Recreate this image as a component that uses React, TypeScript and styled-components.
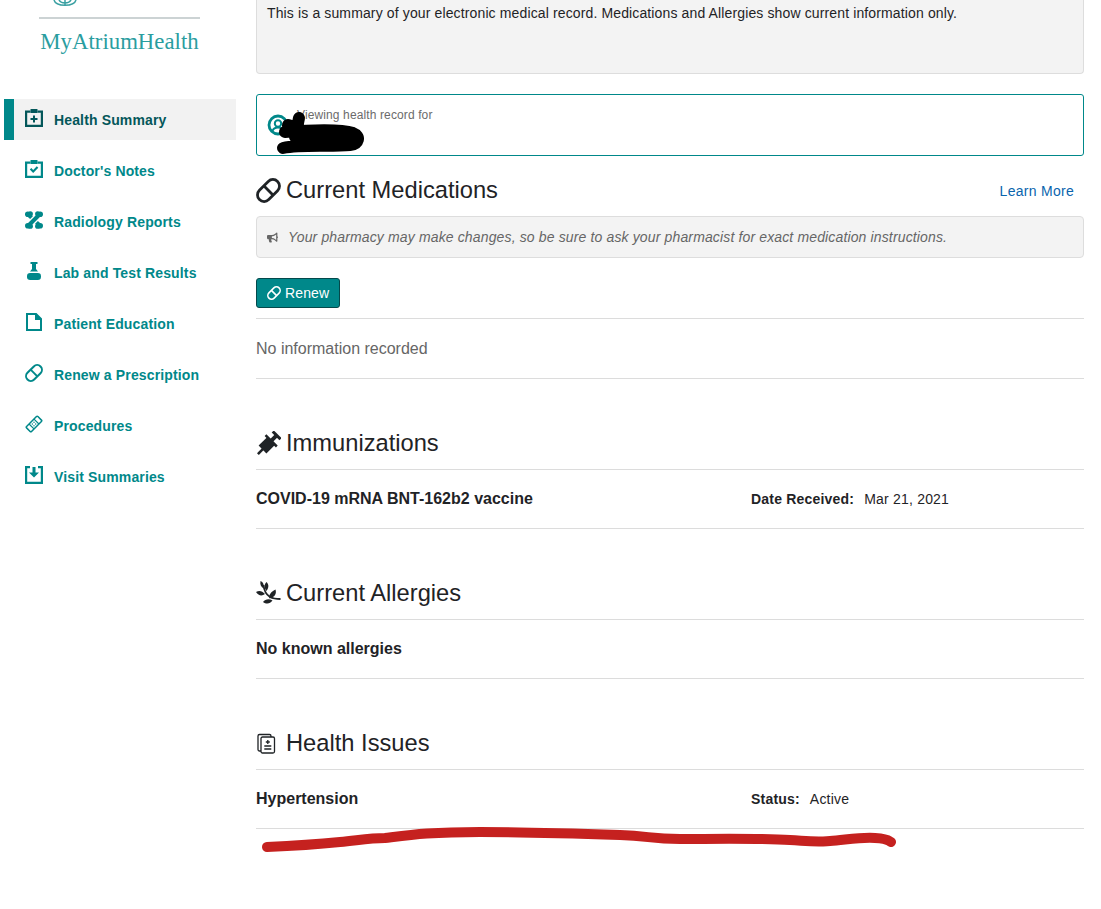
import React from 'react'
import styled, { createGlobalStyle } from 'styled-components'
import { FaBullhorn } from 'react-icons/fa'

const teal = '#00888a'
const dark = '#1f2326'

const GlobalStyle = createGlobalStyle`
  html, body {
    margin: 0;
    padding: 0;
    background: #fff;
    font-family: "Liberation Sans", Arial, sans-serif;
    color: ${dark};
  }
`

const Page = styled.div`
  display: flex;
  height: 909px;
  overflow: hidden;
  position: relative;
`

const Sidebar = styled.aside`
  width: 232px;
  flex-shrink: 0;
  padding-left: 4px;
  margin-right: 20px;
`

const Logo = styled.div`
  height: 99px;
  padding-left: 35px;
  box-sizing: border-box;
`

const LogoMark = styled.svg`
  display: block;
  margin-left: 14px;
  width: 24px;
  height: 6px;
`

const LogoRule = styled.div`
  width: 161px;
  height: 2px;
  margin-top: 11px;
  background: #ccd3d4;
`

const LogoText = styled.div`
  margin-top: 10px;
  width: 161px;
  text-align: center;
  font-family: "Liberation Serif", "Times New Roman", serif;
  font-size: 22.8px;
  line-height: 26px;
  white-space: nowrap;
  color: #2a9d9f;
`

const Nav = styled.nav`
  display: flex;
  flex-direction: column;
  gap: 10px;
`

const NavItem = styled.a<{ $active?: boolean }>`
  display: flex;
  align-items: center;
  height: 41px;
  box-sizing: border-box;
  padding-left: ${({ $active }) => ($active ? '11px' : '21px')};
  border-left: ${({ $active }) => ($active ? `10px solid ${teal}` : 'none')};
  background: ${({ $active }) => ($active ? '#f2f2f2' : 'transparent')};
  color: ${({ $active }) => ($active ? '#04575a' : teal)};
  font-size: 14px;
  font-weight: 700;
  letter-spacing: 0.14px;
`

const NavIcon = styled.svg`
  width: 18px;
  height: 18px;
  margin-right: 11px;
  margin-top: -3px;
  flex-shrink: 0;
  fill: currentColor;
`

const Main = styled.main`
  width: 828px;
`

const SummaryBox = styled.div`
  height: 74px;
  box-sizing: border-box;
  padding: 5px 10px;
  background: #f3f3f3;
  border: 1px solid #ddd;
  border-top: none;
  border-radius: 0 0 4px 4px;
  font-size: 14px;
  line-height: 16px;
  letter-spacing: 0.13px;
`

const PatientBox = styled.div`
  display: flex;
  height: 62px;
  box-sizing: border-box;
  margin-top: 20px;
  padding: 13px 10px;
  border: 1px solid ${teal};
  border-radius: 3px;
`

const PatientIcon = styled.svg`
  width: 22px;
  height: 22px;
  margin-top: 6px;
  margin-right: 8px;
  flex-shrink: 0;
`

const PatientLabel = styled.div`
  font-size: 12px;
  line-height: 14px;
  letter-spacing: 0.12px;
  color: #6b6b6b;
`

const SectionHead = styled.div<{ $top: number }>`
  display: flex;
  align-items: center;
  height: 36px;
  margin-top: ${({ $top }) => $top}px;
`

const Title = styled.h2`
  flex: 1;
  margin: 0;
  font-size: 23.7px;
  font-weight: 400;
  line-height: 36px;
  color: ${dark};
`

const TitleIcon = styled.svg`
  display: block;
  width: 25px;
  height: 25px;
  margin-right: 5px;
  flex-shrink: 0;
  fill: ${dark};
`

const LearnMore = styled.a`
  padding: 2px 10px 0 0;
  font-size: 14px;
  letter-spacing: 0.28px;
  color: #0a64ad;
`

const Notice = styled.div`
  display: flex;
  align-items: center;
  height: 42px;
  box-sizing: border-box;
  margin-top: 8px;
  padding: 0 10px;
  background: #f3f3f3;
  border: 1px solid #ddd;
  border-radius: 4px;
  font-size: 14px;
  font-style: italic;
  letter-spacing: 0.14px;
  color: #666;

  svg {
    margin-right: 10px;
    width: 11px;
    height: 11px;
  }
`

const RenewButton = styled.button`
  display: flex;
  align-items: center;
  gap: 4px;
  height: 30px;
  width: 84px;
  box-sizing: border-box;
  margin-top: 20px;
  padding: 0 10px;
  background: ${teal};
  border: 1px solid #04494b;
  border-radius: 3px;
  font-family: inherit;
  font-size: 14px;
  letter-spacing: 0.14px;
  color: #fff;
`

const ButtonIcon = styled.svg`
  width: 14px;
  height: 14px;
  flex-shrink: 0;
`

const Rule = styled.div<{ $top?: number }>`
  height: 1px;
  margin-top: ${({ $top }) => $top ?? 0}px;
  background: #dcdcdc;
`

const EmptyText = styled.div`
  display: flex;
  align-items: center;
  height: 59px;
  font-size: 16px;
  color: #666;
`

const Row = styled.div`
  display: flex;
  align-items: center;
  height: 58px;
`

const RowName = styled.div`
  width: 495px;
  font-size: 16px;
  font-weight: 700;
`

const RowLabel = styled.span`
  margin-right: 10px;
  font-size: 14px;
  font-weight: 700;
  letter-spacing: 0.2px;
`

const RowValue = styled.span`
  font-size: 14px;
  letter-spacing: 0.2px;
`

const Scribble = styled.svg`
  position: absolute;
  left: 0;
  top: 0;
  width: 1101px;
  height: 909px;
  fill: none;
  stroke-linecap: round;
  stroke-linejoin: round;
  pointer-events: none;
`

const Pill = ({ color }: { color: string }) => (
  <g transform="rotate(-45 9 9)" fill="none" stroke={color} strokeWidth="2">
    <rect x="-0.250" y="4.250" width="18.500" height="9.500" rx="4.750" />
    <path d="M9 4.250v9.500" />
  </g>
)

const Clipboard = ({ children }: { children: React.ReactNode }) => (
  <NavIcon viewBox="0 0 18 18">
    <path d="M0 1.500h5.500v2.200H2.200v12.100h13.600V3.700h-3.300V1.500H18V18H0z" />
    <rect x="5.500" y="0" width="7" height="4" rx="0.500" />
    {children}
  </NavIcon>
)

const items: { label: string; icon: React.ReactNode; active?: boolean }[] = [
  {
    label: 'Health Summary',
    active: true,
    icon: (
      <Clipboard>
        <path d="M8 6.500h2V9h2.500v2H10v2.500H8V11H5.500V9H8z" />
      </Clipboard>
    ),
  },
  {
    label: "Doctor's Notes",
    icon: (
      <Clipboard>
        <path d="M4.800 9.500l1.500-1.500 1.900 1.900 3.600-3.600 1.500 1.500-5.100 5.100z" />
      </Clipboard>
    ),
  },
  {
    label: 'Radiology Reports',
    icon: (
      <NavIcon viewBox="0 0 18 18">
        <circle cx="2.800" cy="3.300" r="2.800" />
        <circle cx="5.300" cy="2.800" r="2.600" />
        <circle cx="15.200" cy="3.300" r="2.800" />
        <circle cx="12.700" cy="2.800" r="2.600" />
        <circle cx="2.800" cy="14.700" r="2.800" />
        <circle cx="5.300" cy="15.200" r="2.600" />
        <circle cx="15.200" cy="14.700" r="2.800" />
        <circle cx="12.700" cy="15.200" r="2.600" />
        <path d="M4 14L14 4" stroke="currentColor" strokeWidth="4" />
        <path d="M3.800 4l2.700 2.700M14.200 14l-2.700-2.700" stroke="currentColor" strokeWidth="4" />
      </NavIcon>
    ),
  },
  {
    label: 'Lab and Test Results',
    icon: (
      <NavIcon viewBox="0 0 18 18">
        <path d="M5.500 0h7v2H11v5l2 2.500H5L7 7V2H5.500z" />
        <rect x="2" y="11" width="14" height="7" rx="3.200" />
      </NavIcon>
    ),
  },
  {
    label: 'Patient Education',
    icon: (
      <NavIcon viewBox="0 0 18 18">
        <path d="M1 0h10.500L17 5.500V18H1zM3 2v14h12V7h-5V2z" />
      </NavIcon>
    ),
  },
  {
    label: 'Renew a Prescription',
    icon: (
      <NavIcon viewBox="0 0 18 18">
        <Pill color={teal} />
      </NavIcon>
    ),
  },
  {
    label: 'Procedures',
    icon: (
      <NavIcon viewBox="0 0 18 18">
        <g transform="rotate(-45 9 9)">
          <rect x="1" y="5.500" width="16" height="7" rx="1" fill="none" stroke="currentColor" strokeWidth="1.500" />
          <path d="M5.500 5.500v7M12.500 5.500v7" stroke="currentColor" strokeWidth="1.200" />
          <circle cx="7.800" cy="7.800" r="0.700" />
          <circle cx="10.200" cy="7.800" r="0.700" />
          <circle cx="7.800" cy="10.200" r="0.700" />
          <circle cx="10.200" cy="10.200" r="0.700" />
        </g>
      </NavIcon>
    ),
  },
  {
    label: 'Visit Summaries',
    icon: (
      <NavIcon viewBox="0 0 18 18">
        <path d="M0 0h5v2.200H2.200v13.600h13.600V2.200H13V0h5v18H0z" />
        <path d="M7.500 1h3v5.500H14L9 11.500 4 6.500h3.500z" />
      </NavIcon>
    ),
  },
]

export default function App() {
  return (
    <Page>
      <GlobalStyle />
      <Sidebar>
        <Logo>
          <LogoMark viewBox="0 0 24 6" fill="none" stroke="#3aa0a2" strokeWidth="1.500">
            <path d="M1 0c1 3.500 5 5.200 11 5.200S22 3.500 23 0M12 0v5.500M6 0c1 2 3 3 6 3s5-1 6-3" />
          </LogoMark>
          <LogoRule />
          <LogoText>MyAtriumHealth</LogoText>
        </Logo>
        <Nav>
          {items.map(i => (
            <NavItem key={i.label} $active={i.active}>
              {i.icon}
              {i.label}
            </NavItem>
          ))}
        </Nav>
      </Sidebar>

      <Main>
        <SummaryBox>
          This is a summary of your electronic medical record. Medications and Allergies show current information only.
        </SummaryBox>

        <PatientBox>
          <PatientIcon viewBox="0 0 22 22" fill="none" stroke={teal}>
            <circle cx="11" cy="11" r="9" strokeWidth="2.800" />
            <circle cx="11" cy="9.500" r="3.200" strokeWidth="2" />
            <path d="M5.500 17c1-3 3-3.500 5.500-3.500s4.500.5 5.500 3.500" strokeWidth="2" />
          </PatientIcon>
          <PatientLabel>Viewing health record for</PatientLabel>
        </PatientBox>

        <SectionHead $top={16}>
          <TitleIcon viewBox="0 0 18 18">
            <Pill color={dark} />
          </TitleIcon>
          <Title>Current Medications</Title>
          <LearnMore>Learn More</LearnMore>
        </SectionHead>
        <Notice>
          <FaBullhorn />
          Your pharmacy may make changes, so be sure to ask your pharmacist for exact medication instructions.
        </Notice>
        <RenewButton>
          <ButtonIcon viewBox="0 0 18 18">
            <Pill color="#fff" />
          </ButtonIcon>
          Renew
        </RenewButton>
        <Rule $top={10} />
        <EmptyText>No information recorded</EmptyText>
        <Rule />

        <SectionHead $top={46}>
          <TitleIcon viewBox="0 0 25 25">
            <g transform="rotate(-45 12.500 12.500)">
              <rect x="-2.500" y="11.200" width="8" height="2.600" />
              <rect x="4" y="7" width="12" height="11" />
              <rect x="15" y="4.500" width="2.500" height="16" />
              <rect x="17" y="10.500" width="6" height="4" />
              <rect x="22.500" y="7" width="3" height="11" />
            </g>
          </TitleIcon>
          <Title>Immunizations</Title>
        </SectionHead>
        <Rule $top={8} />
        <Row>
          <RowName>COVID-19 mRNA BNT-162b2 vaccine</RowName>
          <RowLabel>Date Received:</RowLabel>
          <RowValue>Mar 21, 2021</RowValue>
        </Row>
        <Rule />

        <SectionHead $top={46}>
          <TitleIcon viewBox="0 0 25 25">
            <path d="M10.500 1c2.500 2.300 2.500 5.500 0 9-2.500-3.500-2.500-6.700 0-9zM4.500 0c2.700 1 3.800 3.500 3.300 7.500C5 6.300 3.800 3.500 4.500 0zM0 11c3-1.800 6-1.400 9 2-3 2.500-6.500 1.800-9-2zM7 21c2.500-3 6-3.400 9.500-1.500-2.500 3.500-6 4-9.500 1.500zM13.500 17.500c-.8-3.500 1-6.500 6-9 1.300 4.300-.5 7.500-6 9z" />
            <path
              d="M7.500 4c.5 5 2.500 9.500 6.500 12 2.800 1.500 6 2 10.500 2"
              fill="none"
              stroke={dark}
              strokeWidth="1.800"
            />
          </TitleIcon>
          <Title>Current Allergies</Title>
        </SectionHead>
        <Rule $top={8} />
        <Row>
          <RowName>No known allergies</RowName>
        </Row>
        <Rule />

        <SectionHead $top={46}>
          <TitleIcon viewBox="0 0 25 25">
            <g fill="none" stroke={dark} strokeWidth="1.300">
              <path d="M5 20H3.500A1.500 1.500 0 0 1 2 18.500V5a1.500 1.500 0 0 1 1.500-1.500h10A1.500 1.500 0 0 1 15 5v1" />
              <rect x="5" y="6" width="13.500" height="16" rx="1.500" />
              <path d="M11.800 9v4M9.800 11h4M8.300 15h7M8.300 18h7" />
            </g>
          </TitleIcon>
          <Title>Health Issues</Title>
        </SectionHead>
        <Rule $top={8} />
        <Row>
          <RowName>Hypertension</RowName>
          <RowLabel>Status:</RowLabel>
          <RowValue>Active</RowValue>
        </Row>
        <Rule />
      </Main>

      <Scribble viewBox="0 0 1101 909">
        <path
          d="M299 118l-2 10M288 125l10 3M285 132c25-2 56-3 68 1 8 3 6 11-3 12-20 2-48-1-67 3M295 137h55"
          stroke="#000"
          strokeWidth="12"
        />
        <path
          d="M267 847C290 846 320 844 340 842S370 838 385 838C410 835 430 832 480 832C520 832 590 834 620 835S650 839 680 839S760 838 790 840S815 842 830 841S860 837 875 838S888 841 891 842"
          stroke="#c5211f"
          strokeWidth="10"
        />
      </Scribble>
    </Page>
  )
}
